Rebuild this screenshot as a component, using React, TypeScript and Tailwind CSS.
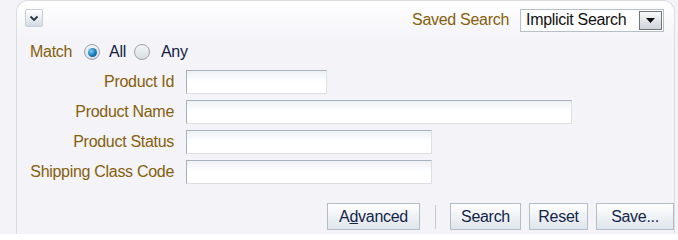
import { useState } from 'react'

const FONT = { fontFamily: '"Liberation Sans", Arial, sans-serif' }

function Field({ label, width }: { label: string; width: string }) {
  return (
    <div className="flex h-[30px] items-center">
      <label className="w-[144px] shrink-0 text-right text-[#86600b]">{label}</label>
      <input
        className={`ml-[12px] h-[24px] ${width} border border-t-[#a9b1bd] border-l-[#a9b1bd] border-r-[#dcdfe4] border-b-[#dcdfe4] bg-gradient-to-b from-[#eef1f4] via-white to-white px-1 outline-none`}
      />
    </div>
  )
}

function Radio({ checked, onClick }: { checked: boolean; onClick: () => void }) {
  return (
    <button
      onClick={onClick}
      className="flex h-[16px] w-[16px] items-center justify-center rounded-full border border-[#9aa3ad] bg-gradient-to-b from-[#f4f5f7] to-[#d9dde2]"
    >
      {checked && (
        <span className="h-[9px] w-[9px] rounded-full bg-[radial-gradient(circle_at_35%_35%,#7fd0f2,#1677b8_55%,#0b4f86)]" />
      )}
    </button>
  )
}

function Btn({ children, className = '' }: { children: React.ReactNode; className?: string }) {
  return (
    <button
      className={`h-[27px] border border-[#b3bcc7] bg-gradient-to-b from-white to-[#dfe5ec] text-[#14264a] ${className}`}
    >
      {children}
    </button>
  )
}

export default function App() {
  const [match, setMatch] = useState<'all' | 'any'>('all')

  return (
    <div className="h-[234px] w-[678px] overflow-hidden bg-[#f3f3f8] text-[16px] tracking-[-0.3px]" style={FONT}>
      <div className="ml-[16px] mr-[3px] h-full rounded-t-[12px] border-l border-r border-t border-[#dcdce3] bg-gradient-to-b from-white to-[#f3f3f8] to-[40px]">
        {/* header */}
        <div className="flex h-[36px] items-start justify-between pl-[8px] pr-[10px] pt-[7px]">
          <button className="mt-[1px] flex h-[18px] w-[18px] items-center justify-center rounded-[2px] border border-[#c9ced6] bg-gradient-to-b from-white to-[#d5dae2]">
            <svg width="10" height="7" viewBox="0 0 10 7">
              <path d="M1.5 1.5 L5 5 L8.5 1.5" fill="none" stroke="#2a3344" strokeWidth="1.8" />
            </svg>
          </button>
          <div className="flex items-center">
            <span className="text-[#86600b]">Saved Search</span>
            <div className="ml-[11px] flex h-[23px] w-[144px] items-center border border-[#b9bfc8] bg-white">
              <span className="flex-1 pl-[5px] text-[#111]">Implicit Search</span>
              <span className="mr-[1px] flex h-[19px] w-[23px] items-center justify-center border border-[#6f7680] bg-gradient-to-b from-[#f8f9fa] to-[#cfd3d8]">
                <svg width="9" height="5" viewBox="0 0 9 5">
                  <path d="M0 0 H9 L4.5 5 Z" fill="#111" />
                </svg>
              </span>
            </div>
          </div>
        </div>

        {/* form */}
        <div className="pl-[13px]">
          <div className="flex h-[30px] items-center">
            <span className="text-[#86600b]">Match</span>
            <div className="ml-[12px] flex items-center">
              <Radio checked={match === 'all'} onClick={() => setMatch('all')} />
              <span className="ml-[9px] text-[#14243f]">All</span>
              <span className="ml-[8px]">
                <Radio checked={match === 'any'} onClick={() => setMatch('any')} />
              </span>
              <span className="ml-[11px] text-[#14243f]">Any</span>
            </div>
          </div>
          <Field label="Product Id" width="w-[141px]" />
          <Field label="Product Name" width="w-[386px]" />
          <Field label="Product Status" width="w-[246px]" />
          <Field label="Shipping Class Code" width="w-[246px]" />
        </div>

        {/* actions */}
        <div className="mt-[16px] flex items-center justify-end">
          <Btn className="w-[93px]">
            A<span className="underline">d</span>vanced
          </Btn>
          <span className="ml-[15px] mr-[14px] h-[24px] w-px bg-[#c4cad2]" />
          <Btn className="w-[71px]">Search</Btn>
          <Btn className="ml-[8px] w-[59px]">Reset</Btn>
          <Btn className="ml-[8px] w-[78px]">Save...</Btn>
        </div>
      </div>
    </div>
  )
}
